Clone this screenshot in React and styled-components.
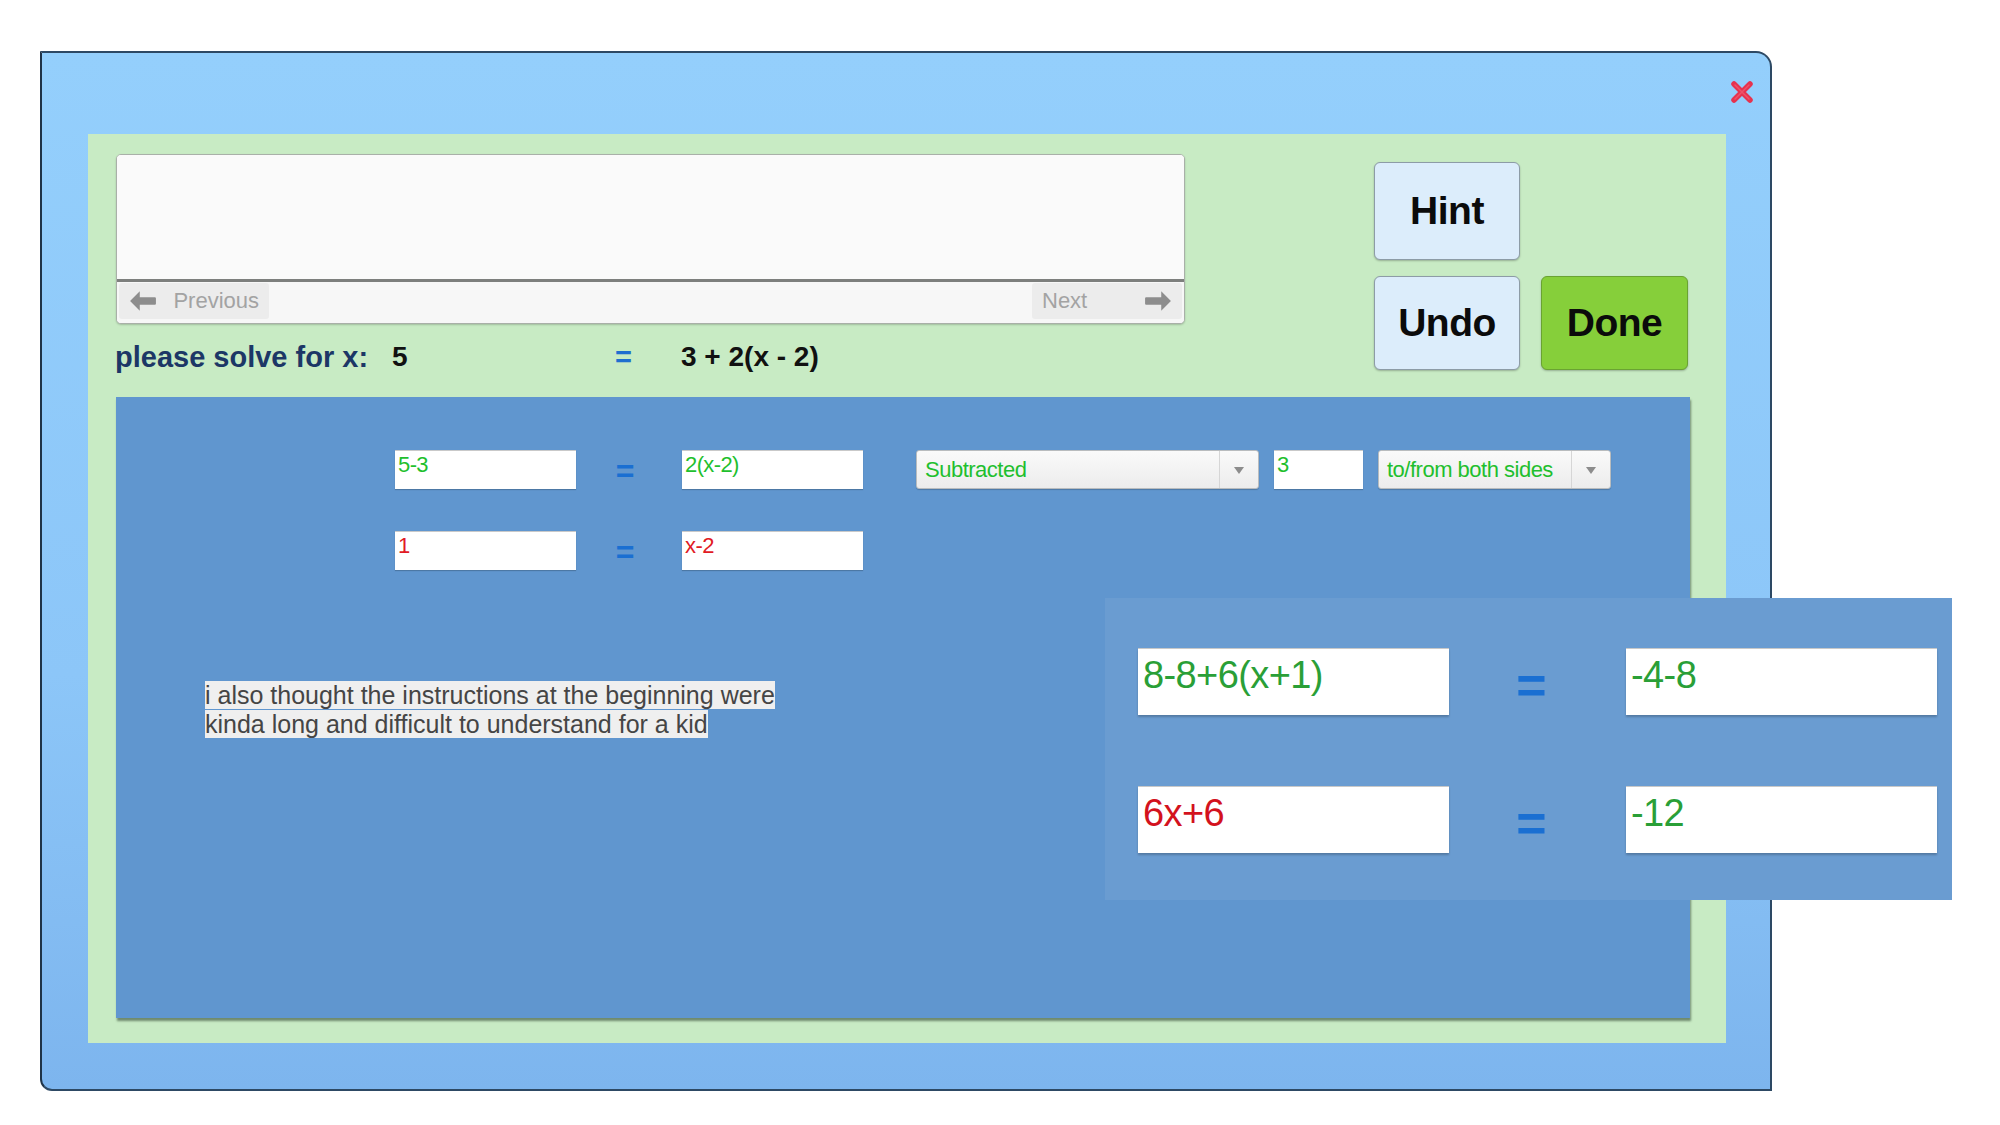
import styled, { createGlobalStyle } from "styled-components";

const GlobalStyle = createGlobalStyle`
  html, body {
    margin: 0;
    padding: 0;
    background: #ffffff;
    font-family: "Liberation Sans", Arial, sans-serif;
  }
`;

const steps = [
  { left: "5-3", right: "2(x-2)", color: "green", action: true },
  { left: "1", right: "x-2", color: "red" },
];

const bigSteps = [
  { left: "8-8+6(x+1)", right: "-4-8", leftColor: "green", rightColor: "green" },
  { left: "6x+6", right: "-12", leftColor: "red", rightColor: "green" },
];

const ArrowLeft = () => (
  <svg width="28" height="22" viewBox="0 0 26 20">
    <path d="M10 1 L1 10 L10 19 L10 13.5 L24 13.5 Q25 13.5 25 12.5 L25 7.5 Q25 6.5 24 6.5 L10 6.5 Z" fill="#8d8d8d" />
  </svg>
);

const ArrowRight = () => (
  <svg width="28" height="22" viewBox="0 0 26 20">
    <path d="M16 1 L25 10 L16 19 L16 13.5 L2 13.5 Q1 13.5 1 12.5 L1 7.5 Q1 6.5 2 6.5 L16 6.5 Z" fill="#8d8d8d" />
  </svg>
);

const CloseIcon = () => (
  <svg width="24" height="24" viewBox="0 0 24 24">
    <path d="M4 4 L20 20 M20 4 L4 20" stroke="#e6324e" strokeWidth="5.5" strokeLinecap="round" />
    <path d="M5 5 L19 19 M19 5 L5 19" stroke="#f4687c" strokeWidth="1.5" strokeLinecap="round" opacity="0.6" />
  </svg>
);

const App = () => {
  return (
    <Page>
      <GlobalStyle />
      <Dialog>
        <CloseButton>
          <CloseIcon />
        </CloseButton>
        <Panel>
          <TopRow>
            <LeftCol>
              <MessageBox>
                <MessageArea />
                <NavBar>
                  <NavButton>
                    <ArrowLeft />
                    <span>Previous</span>
                  </NavButton>
                  <NavButton>
                    <span>Next</span>
                    <ArrowRight />
                  </NavButton>
                </NavBar>
              </MessageBox>
              <Problem>
                <ProblemLabel>please solve for x:</ProblemLabel>
                <ProblemValue>5</ProblemValue>
                <ProblemEq>=</ProblemEq>
                <ProblemValue>3 + 2(x - 2)</ProblemValue>
              </Problem>
            </LeftCol>
            <ButtonGrid>
              <ActionButton>Hint</ActionButton>
              <span />
              <ActionButton>Undo</ActionButton>
              <ActionButton $primary>Done</ActionButton>
            </ButtonGrid>
          </TopRow>

          <WorkArea>
            <Steps>
              {steps.map((s, i) => (
                <StepRow key={i}>
                  <StepBox $color={s.color}>{s.left}</StepBox>
                  <EqSign>=</EqSign>
                  <StepBox $color={s.color}>{s.right}</StepBox>
                  {s.action && (
                    <Actions>
                      <Select $width={343}>
                        <SelectText>Subtracted</SelectText>
                        <SelectArrow />
                      </Select>
                      <AmountBox>3</AmountBox>
                      <Select $width={233}>
                        <SelectText>to/from both sides</SelectText>
                        <SelectArrow />
                      </Select>
                    </Actions>
                  )}
                </StepRow>
              ))}
            </Steps>
            <Comment>
              <CommentText>
                i also thought the instructions at the beginning were kinda long and difficult to understand for a kid
              </CommentText>
            </Comment>
          </WorkArea>
        </Panel>
      </Dialog>

      <Overlay>
        {bigSteps.map((s, i) => (
          <BigRow key={i}>
            <BigBox $color={s.leftColor}>{s.left}</BigBox>
            <BigEq>=</BigEq>
            <BigBox $color={s.rightColor}>{s.right}</BigBox>
          </BigRow>
        ))}
      </Overlay>
    </Page>
  );
};

export default App;

/* ---------------------- STYLED COMPONENTS ---------------------- */

const colors = {
  green: "#1fbf2e",
  red: "#e11a24",
};

const bigColors = {
  green: "#2a9f37",
  red: "#d3121d",
};

const Page = styled.div`
  position: relative;
  width: 2000px;
  height: 1125px;
  padding: 51px 0 0 40px;
  box-sizing: border-box;
  overflow: hidden;
`;

const Dialog = styled.div`
  position: relative;
  width: 1732px;
  height: 1040px;
  box-sizing: border-box;
  border: 2px solid #2d4964;
  border-left-color: #1f3347;
  border-radius: 0 16px 0 12px;
  background: linear-gradient(180deg, #94cffc 0%, #8cc6f8 60%, #7db5ee 100%);
  padding: 81px 44px 46px 46px;
`;

const CloseButton = styled.div`
  position: absolute;
  top: 27px;
  right: 16px;
  width: 24px;
  height: 24px;
  cursor: pointer;
`;

const Panel = styled.div`
  width: 100%;
  height: 100%;
  box-sizing: border-box;
  background: #c8ebc4;
  padding: 20px 36px 25px 28px;
  display: flex;
  flex-direction: column;
`;

const TopRow = styled.div`
  display: flex;
  height: 243px;
`;

const LeftCol = styled.div`
  width: 1069px;
  display: flex;
  flex-direction: column;
`;

const MessageBox = styled.div`
  height: 170px;
  box-sizing: border-box;
  border: 1px solid #a9b0a8;
  border-radius: 5px;
  background: #f4f4f4;
  box-shadow: 0 1px 2px rgba(0, 0, 0, 0.2);
  display: flex;
  flex-direction: column;
  overflow: hidden;
`;

const MessageArea = styled.div`
  height: 124px;
  background: #fafafa;
  border-bottom: 3px solid #7d7f7d;
`;

const NavBar = styled.div`
  flex: 1;
  display: flex;
  justify-content: space-between;
  align-items: stretch;
  padding: 1px 2px 4px 2px;
  background: #f7f7f7;
`;

const NavButton = styled.div`
  display: flex;
  align-items: center;
  gap: 10px;
  padding: 0 10px;
  min-width: 130px;
  justify-content: space-between;
  background: #ececec;
  border-radius: 3px;
  color: #a3a3a3;
  font-size: 22px;
`;

const Problem = styled.div`
  display: grid;
  grid-template-columns: 277px 223px 66px auto;
  align-items: center;
  padding-top: 18px;
  margin-left: -1px;
  line-height: 30px;
`;

const ProblemLabel = styled.span`
  color: #1c3766;
  font-weight: bold;
  font-size: 29px;
`;

const ProblemValue = styled.span`
  color: #111;
  font-weight: bold;
  font-size: 28px;
`;

const ProblemEq = styled.span`
  color: #1f6fcf;
  font-weight: bold;
  font-size: 29px;
`;

const ButtonGrid = styled.div`
  margin-left: auto;
  margin-right: 2px;
  padding-top: 8px;
  display: grid;
  grid-template-columns: 146px 147px;
  grid-template-rows: 98px 94px;
  column-gap: 21px;
  row-gap: 16px;
`;

const ActionButton = styled.div`
  display: flex;
  align-items: center;
  justify-content: center;
  box-sizing: border-box;
  border-radius: 6px;
  border: 1px solid ${(p) => (p.$primary ? "#6aa332" : "#8d9ca6")};
  background: ${(p) => (p.$primary ? "#86cf3a" : "#dcedfb")};
  box-shadow: 0 1px 2px rgba(0, 0, 0, 0.25);
  font-size: 39px;
  font-weight: bold;
  color: #0b0b0b;
  letter-spacing: -0.5px;
`;

const WorkArea = styled.div`
  flex: 1;
  background: #6096cf;
  box-shadow: 1px 3px 2px rgba(40, 60, 40, 0.55);
  padding: 53px 0 0 89px;
`;

const Steps = styled.div`
  margin-left: 190px;
  display: flex;
  flex-direction: column;
  gap: 42px;
`;

const StepRow = styled.div`
  display: flex;
  align-items: center;
  height: 39px;
`;

const StepBox = styled.div`
  width: 181px;
  height: 39px;
  box-sizing: border-box;
  background: #ffffff;
  border-top: 1px solid #c9c9c9;
  box-shadow: 0 1px 1px rgba(0, 0, 0, 0.2);
  padding: 1px 3px;
  font-size: 22px;
  line-height: 26px;
  color: ${(p) => colors[p.$color]};
  letter-spacing: -0.6px;
`;

const EqSign = styled.div`
  width: 106px;
  box-sizing: border-box;
  padding: 4px 8px 0 0;
  text-align: center;
  color: #1a6fd2;
  font-weight: bold;
  font-size: 32px;
`;

const Actions = styled.div`
  display: flex;
  gap: 15px;
  margin-left: 53px;
`;

const Select = styled.div`
  width: ${(p) => p.$width}px;
  height: 39px;
  box-sizing: border-box;
  display: flex;
  align-items: stretch;
  border: 1px solid #b9bcbe;
  border-radius: 3px;
  background: linear-gradient(180deg, #fafafa 0%, #ececec 100%);
  box-shadow: 0 1px 1px rgba(0, 0, 0, 0.2);
`;

const SelectText = styled.div`
  flex: 1;
  display: flex;
  align-items: center;
  padding: 0 8px;
  font-size: 22px;
  color: ${colors.green};
  letter-spacing: -0.5px;
  white-space: nowrap;
`;

const SelectArrow = styled.div`
  width: 38px;
  border-left: 1px solid #d6d6d6;
  position: relative;

  &::after {
    content: "";
    position: absolute;
    left: 50%;
    top: 50%;
    margin: -3px 0 0 -5px;
    border-left: 5px solid transparent;
    border-right: 5px solid transparent;
    border-top: 7px solid #8c8c8c;
  }
`;

const AmountBox = styled(StepBox)`
  width: 89px;
  color: ${colors.green};
`;

const Comment = styled.div`
  margin-top: 111px;
  width: 580px;
  font-size: 25px;
  line-height: 29px;
  color: #454545;
`;

const CommentText = styled.span`
  background: #efefef;
`;

const Overlay = styled.div`
  position: absolute;
  left: 1105px;
  top: 598px;
  width: 847px;
  height: 302px;
  box-sizing: border-box;
  background: #6a9cd1;
  padding: 49px 0 0 33px;
  display: flex;
  flex-direction: column;
  gap: 70px;
`;

const BigRow = styled.div`
  display: flex;
  align-items: center;
`;

const BigBox = styled.div`
  width: 311px;
  height: 67px;
  box-sizing: border-box;
  background: #ffffff;
  border-top: 1px solid #c8c8c8;
  box-shadow: 0 2px 2px rgba(0, 0, 0, 0.22);
  padding: 4px 5px;
  font-size: 38px;
  line-height: 44px;
  color: ${(p) => bigColors[p.$color]};
  letter-spacing: -0.6px;
`;

const BigEq = styled.div`
  width: 177px;
  box-sizing: border-box;
  padding: 8px 12px 0 0;
  text-align: center;
  color: #1a6fd2;
  font-weight: bold;
  font-size: 52px;
`;
